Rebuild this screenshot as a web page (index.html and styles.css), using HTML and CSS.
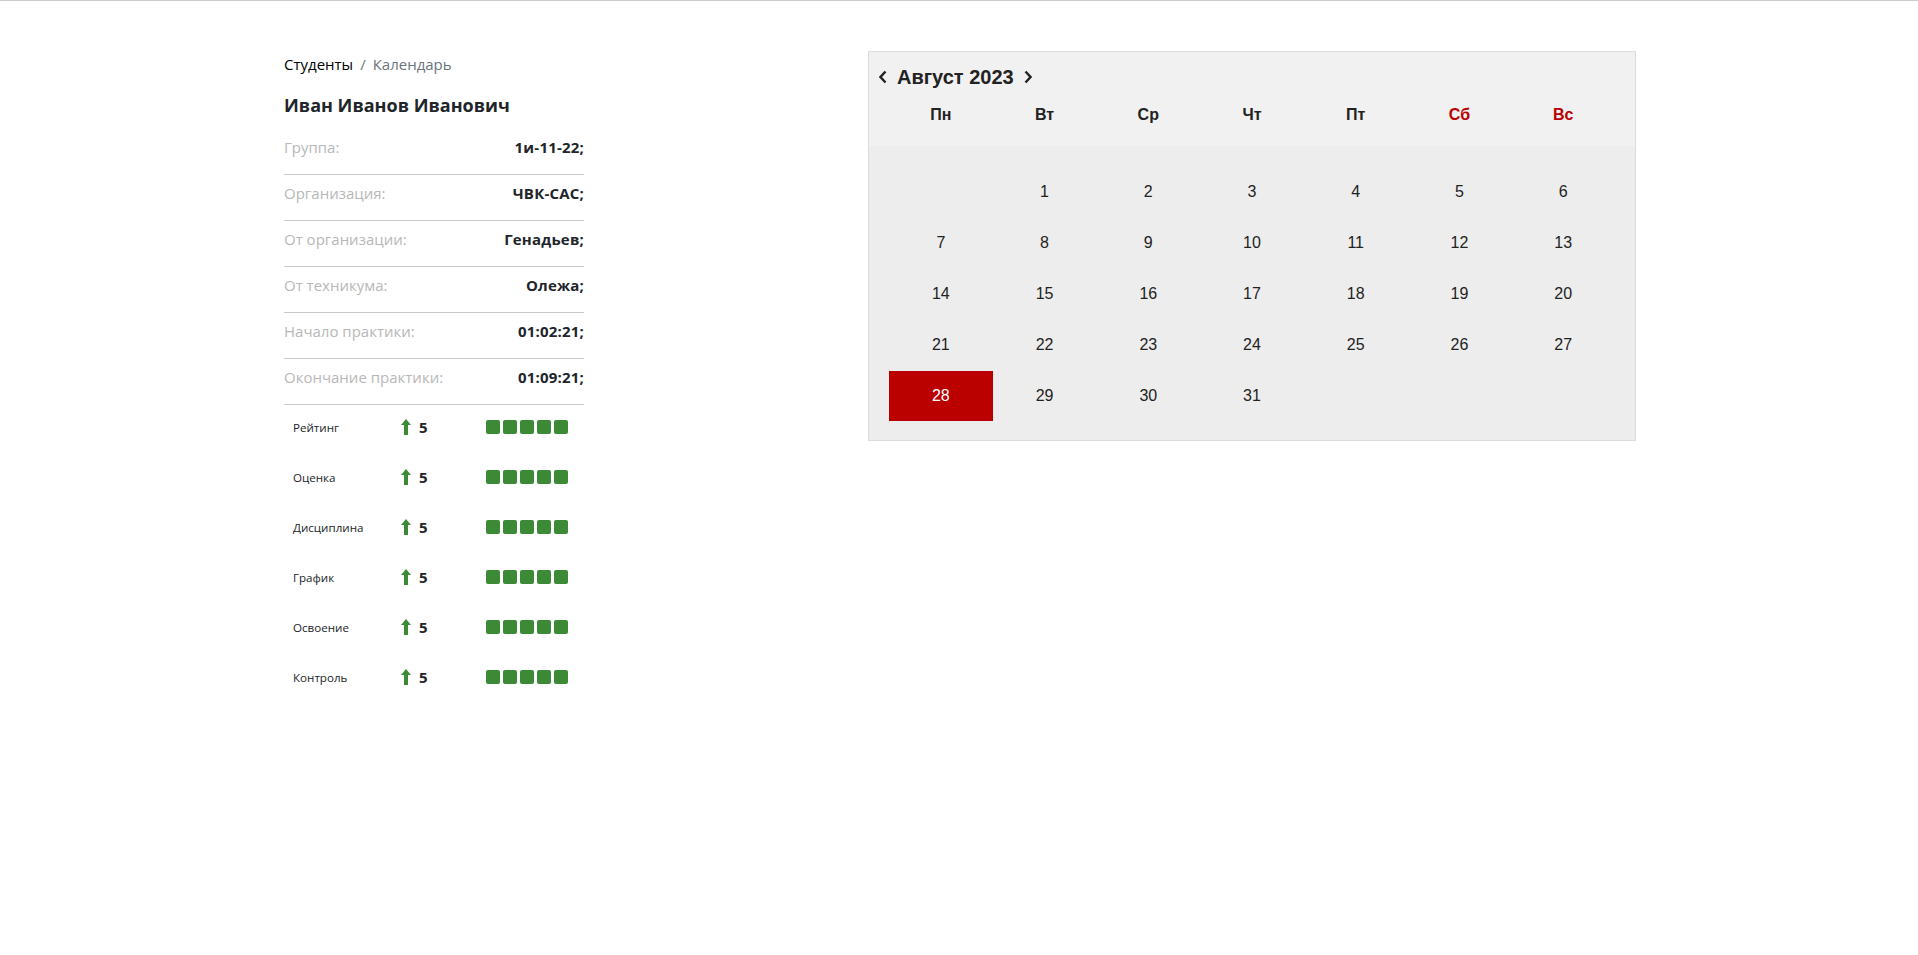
FILE: index.html
```html
<!DOCTYPE html>
<html lang="ru">
<head>
<meta charset="utf-8">
<title>Календарь</title>
<link rel="stylesheet" href="styles.css">
</head>
<body>
<div class="page">
  <div class="info">
    <nav class="crumbs"><span class="crumb-link">Студенты</span><span class="sep">/</span><span class="crumb-cur">Календарь</span></nav>
    <h1 class="name">Иван Иванов Иванович</h1>
    <div class="field"><span class="label">Группа:</span><span class="value">1и-11-22;</span></div>
    <div class="field"><span class="label">Организация:</span><span class="value">ЧВК-САС;</span></div>
    <div class="field"><span class="label">От организации:</span><span class="value">Генадьев;</span></div>
    <div class="field"><span class="label">От техникума:</span><span class="value">Олежа;</span></div>
    <div class="field"><span class="label">Начало практики:</span><span class="value">01:02:21;</span></div>
    <div class="field"><span class="label">Окончание практики:</span><span class="value">01:09:21;</span></div>
    <div class="ratings">
      <div class="rating"><span class="r-label">Рейтинг</span><span class="r-score"><svg class="up" viewBox="0 0 10 16"><path d="M5 0 L10 6 H7 V16 H3 V6 H0 Z"/></svg>5</span><span class="bars"><i></i><i></i><i></i><i></i><i></i></span></div>
      <div class="rating"><span class="r-label">Оценка</span><span class="r-score"><svg class="up" viewBox="0 0 10 16"><path d="M5 0 L10 6 H7 V16 H3 V6 H0 Z"/></svg>5</span><span class="bars"><i></i><i></i><i></i><i></i><i></i></span></div>
      <div class="rating"><span class="r-label">Дисциплина</span><span class="r-score"><svg class="up" viewBox="0 0 10 16"><path d="M5 0 L10 6 H7 V16 H3 V6 H0 Z"/></svg>5</span><span class="bars"><i></i><i></i><i></i><i></i><i></i></span></div>
      <div class="rating"><span class="r-label">График</span><span class="r-score"><svg class="up" viewBox="0 0 10 16"><path d="M5 0 L10 6 H7 V16 H3 V6 H0 Z"/></svg>5</span><span class="bars"><i></i><i></i><i></i><i></i><i></i></span></div>
      <div class="rating"><span class="r-label">Освоение</span><span class="r-score"><svg class="up" viewBox="0 0 10 16"><path d="M5 0 L10 6 H7 V16 H3 V6 H0 Z"/></svg>5</span><span class="bars"><i></i><i></i><i></i><i></i><i></i></span></div>
      <div class="rating"><span class="r-label">Контроль</span><span class="r-score"><svg class="up" viewBox="0 0 10 16"><path d="M5 0 L10 6 H7 V16 H3 V6 H0 Z"/></svg>5</span><span class="bars"><i></i><i></i><i></i><i></i><i></i></span></div>
    </div>
  </div>

  <div class="calendar">
    <div class="cal-head">
      <div class="cal-title">
        <svg class="chev" viewBox="0 0 8 14"><path d="M6.5 1.5 L1.5 7 L6.5 12.5"/></svg>
        <span class="month">Август 2023</span>
        <svg class="chev" viewBox="0 0 8 14"><path d="M1.5 1.5 L6.5 7 L1.5 12.5"/></svg>
      </div>
      <div class="weekdays">
        <span>Пн</span><span>Вт</span><span>Ср</span><span>Чт</span><span>Пт</span><span class="weekend">Сб</span><span class="weekend">Вс</span>
      </div>
    </div>
    <div class="days">
      <span class="day empty"></span>
      <span class="day">1</span><span class="day">2</span><span class="day">3</span><span class="day">4</span><span class="day">5</span><span class="day">6</span>
      <span class="day">7</span><span class="day">8</span><span class="day">9</span><span class="day">10</span><span class="day">11</span><span class="day">12</span><span class="day">13</span>
      <span class="day">14</span><span class="day">15</span><span class="day">16</span><span class="day">17</span><span class="day">18</span><span class="day">19</span><span class="day">20</span>
      <span class="day">21</span><span class="day">22</span><span class="day">23</span><span class="day">24</span><span class="day">25</span><span class="day">26</span><span class="day">27</span>
      <span class="day today">28</span><span class="day">29</span><span class="day">30</span><span class="day">31</span>
    </div>
  </div>
</div>
</body>
</html>
```

FILE: styles.css
```css
* { box-sizing: border-box; }

html, body {
  margin: 0;
  padding: 0;
  background: #fff;
}

body {
  border-top: 1px solid #cccccc;
  font-family: "Open Sans", "Noto Sans", sans-serif;
  color: #212529;
}

.page {
  display: flex;
  align-items: flex-start;
  gap: 284px;
  padding-left: 284px;
}

/* left column */
.info {
  width: 300px;
  padding-top: 53px;
}

.crumbs {
  font-size: 15px;
  line-height: 21px;
  display: flex;
}
.crumb-link { color: #000; }
.sep { color: #6c757d; padding: 0 7px; }
.crumb-cur { color: #6c757d; }

.name {
  margin: 18px 0 0;
  font-size: 18px;
  line-height: 24px;
  font-weight: 700;
  color: #212529;
}

.field {
  display: flex;
  justify-content: space-between;
  align-items: center;
  height: 46px;
  padding: 6px 0 15px;
  border-bottom: 1px solid #c8c8c8;
  font-size: 15px;
  line-height: 24px;
}
.name + .field { margin-top: 12px; }

.label { color: #b8b8b8; }
.value { font-weight: 700; color: #212529; letter-spacing: 0.2px; }

.ratings { display: flex; flex-direction: column; }

.rating {
  display: grid;
  grid-template-columns: 108px 85px auto;
  align-items: center;
  height: 50px;
  padding: 0 0 6px 9px;
}
.r-label { font-size: 11.6px; color: #212529; }
.r-score {
  display: flex;
  align-items: center;
  gap: 8px;
  font-size: 15px;
  font-weight: 700;
  color: #212529;
}
.up { width: 10px; height: 16px; fill: #3c8a35; }

.bars { display: flex; gap: 3px; }
.bars i {
  display: block;
  width: 14px;
  height: 14px;
  border-radius: 2px;
  background: #3c8a35;
}

/* calendar */
.calendar {
  margin-top: 50px;
  width: 768px;
  border: 1px solid #dcdcdc;
  font-family: "Liberation Sans", Arial, sans-serif;
  color: #222;
}

.cal-head {
  background: #f1f1f1;
  padding: 13px 0 21px;
}

.cal-title {
  display: flex;
  align-items: center;
  gap: 10px;
  padding-left: 10px;
  height: 24px;
}
.chev {
  width: 8px;
  height: 14px;
  fill: none;
  stroke: #222;
  stroke-width: 2.4;
}
.month {
  font-size: 20px;
  font-weight: 700;
  line-height: 24px;
}

.weekdays {
  display: grid;
  grid-template-columns: repeat(7, 1fr);
  padding: 0 20px;
  margin-top: 16px;
  font-size: 16px;
  font-weight: 700;
  line-height: 20px;
  text-align: center;
}
.weekend { color: #bb0000; }

.days {
  display: grid;
  grid-template-columns: repeat(7, 1fr);
  grid-auto-rows: 50px;
  row-gap: 1px;
  padding: 21px 20px 19px;
  background: #ededed;
}
.day {
  display: flex;
  align-items: center;
  justify-content: center;
  font-size: 16px;
}
.day.today {
  background: #bb0000;
  color: #fff;
}
```
